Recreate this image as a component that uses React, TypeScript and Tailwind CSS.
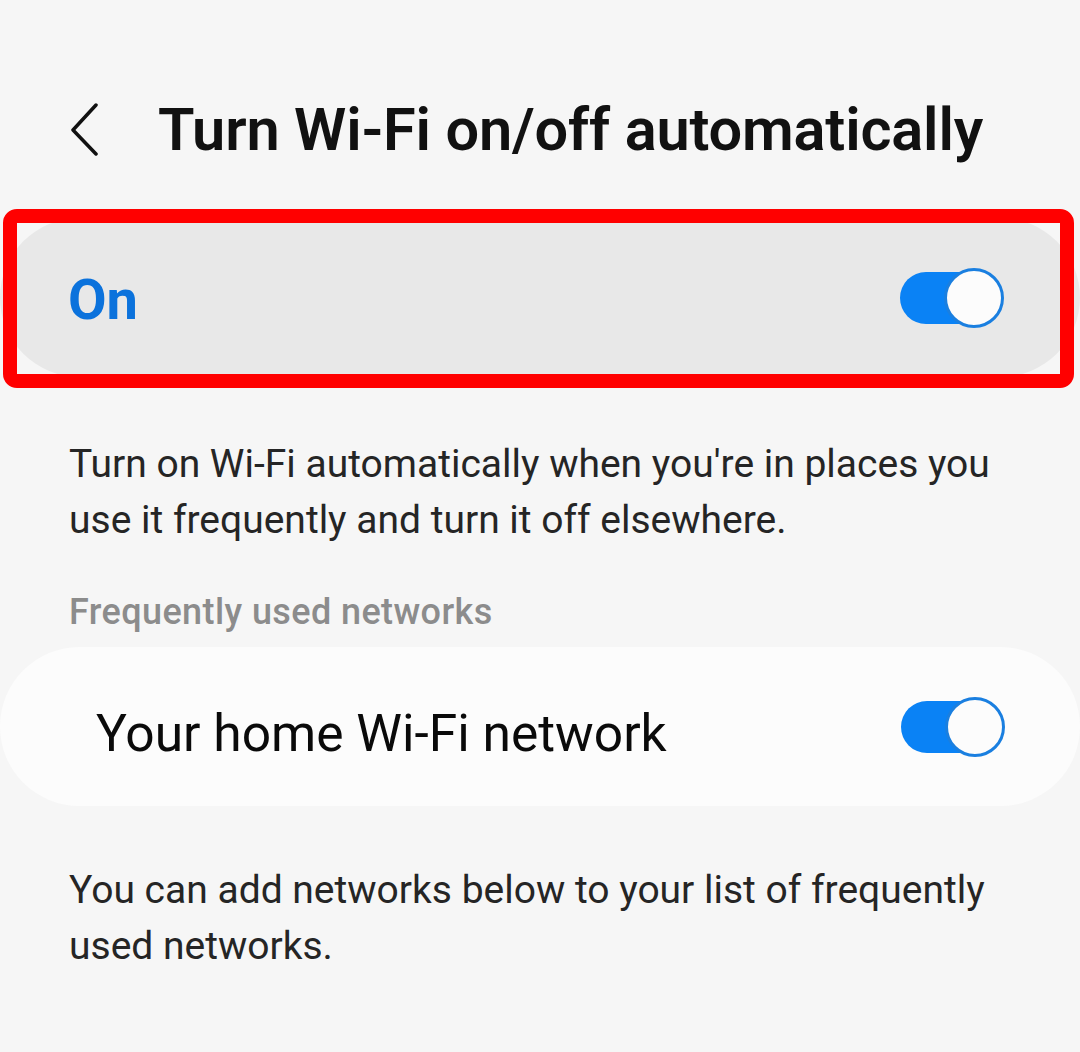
import React from "react";

const roboto = { fontFamily: "Roboto, 'Noto Sans', sans-serif" };

function Toggle() {
  return (
    <div className="relative h-[60px] w-[104px] shrink-0">
      <div className="absolute left-0 top-[4px] h-[52px] w-[92px] rounded-full bg-[#0a82f5]" />
      <div className="absolute right-0 top-0 h-[60px] w-[60px] rounded-full border-[3px] border-[#1a7fe0] bg-[#fcfcfc]" />
    </div>
  );
}

function BackChevron() {
  return (
    <svg width="30" height="54" viewBox="0 0 30 54" fill="none" className="shrink-0">
      <path d="M26 2 L3 27 L26 51" stroke="#111" strokeWidth="3.5" strokeLinecap="round" strokeLinejoin="round" />
    </svg>
  );
}

export default function App() {
  return (
    <div className="min-h-[1052px] w-[1080px] bg-[#f6f6f6] text-[#252525]" style={roboto}>
      {/* Header */}
      <div className="flex items-center pl-[70px] pt-[98px]">
        <BackChevron />
        <h1 className="ml-[58px] text-[59.5px] font-semibold leading-[64px] tracking-[-0.17px] text-[#111]">
          Turn Wi-Fi on/off automatically
        </h1>
      </div>

      {/* Master switch */}
      <div className="relative mt-[56px]">
        <div className="flex h-[159px] items-center justify-between rounded-[80px] bg-[#e8e8e8] pl-[68px] pr-[76px]">
          <span className="pt-[4px] text-[56px] font-bold text-[#0b72dc]">On</span>
          <Toggle />
        </div>
        <div className="pointer-events-none absolute left-[3px] right-[6px] top-[-9px] bottom-[-11px] rounded-[14px] border-[14px] border-[#ff0000]" />
      </div>

      <p className="mt-[59px] px-[69px] text-[39px] leading-[56px] text-[#252525]">
        Turn on Wi-Fi automatically when you're in places you use it frequently and turn it off elsewhere.
      </p>

      <div className="mt-[44px] px-[69px] text-[36px] font-medium leading-[40px] tracking-[0.4px] text-[#8c8c8c]">
        Frequently used networks
      </div>

      {/* Network row */}
      <div className="mt-[15px] flex h-[159px] items-center justify-between rounded-[80px] bg-[#fcfcfc] pl-[96px] pr-[75px]">
        <span className="pt-[14px] text-[51.5px] text-[#0a0a0a]">Your home Wi-Fi network</span>
        <Toggle />
      </div>

      <p className="mt-[56px] px-[69px] text-[39px] leading-[56px] text-[#252525]">
        You can add networks below to your list of frequently used networks.
      </p>
    </div>
  );
}
